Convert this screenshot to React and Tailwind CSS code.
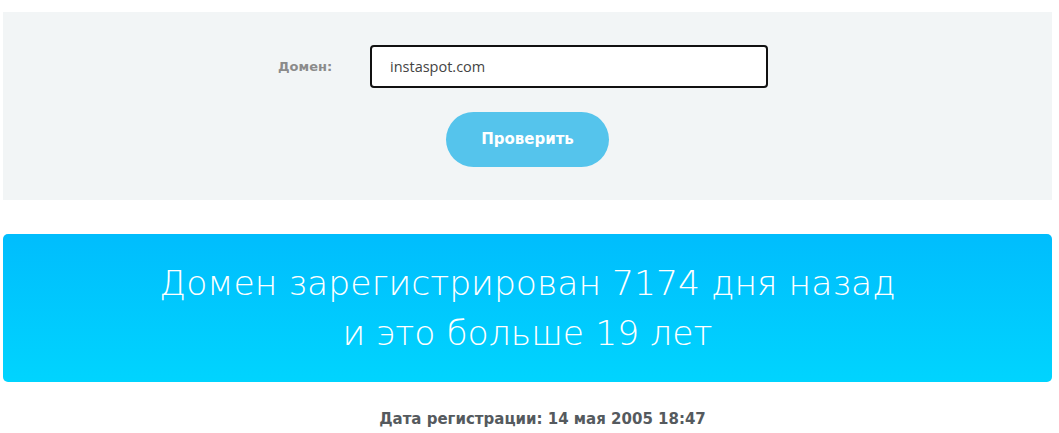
export default function App() {
  return (
    <div className="w-[1059px] h-[433px] bg-white px-[3px] pt-[12px] overflow-hidden">
      <div className="w-[1049px] h-[188px] bg-[#f2f5f6] flex flex-col items-center pt-[33px]">
        <div className="flex items-center pr-[9px]">
          <label className="w-[55px] text-[13px] font-bold text-[#8b8b8b] font-['DejaVu_Sans',sans-serif]">Домен:</label>
          <div className="ml-[37px] w-[398px] h-[43px] bg-white border-2 border-[#111] rounded-[4px] flex items-center pl-[18px] text-[14.5px] text-[#444] font-['Open_Sans',sans-serif]">
            instaspot.com
          </div>
        </div>
        <button className="mt-[24px] w-[163px] h-[55px] rounded-full bg-[#55c4ec] text-white text-[15px] font-bold font-['DejaVu_Sans',sans-serif]">
          Проверить
        </button>
      </div>
      <div className="mt-[34px] w-[1049px] h-[148px] rounded-[5px] bg-gradient-to-b from-[#00bdfd] to-[#00d4fe] flex flex-col items-center justify-center text-white text-[34.6px] font-extralight leading-[50px] font-['DejaVu_Sans',sans-serif]">
        <div>Домен зарегистрирован 7174 дня назад</div>
        <div>и это больше 19 лет</div>
      </div>
      <div className="mt-[26px] pl-[26px] text-center text-[15px] leading-[22px] font-bold text-[#555a5e] font-['DejaVu_Sans',sans-serif]">
        Дата регистрации: 14 мая 2005 18:47
      </div>
    </div>
  );
}
